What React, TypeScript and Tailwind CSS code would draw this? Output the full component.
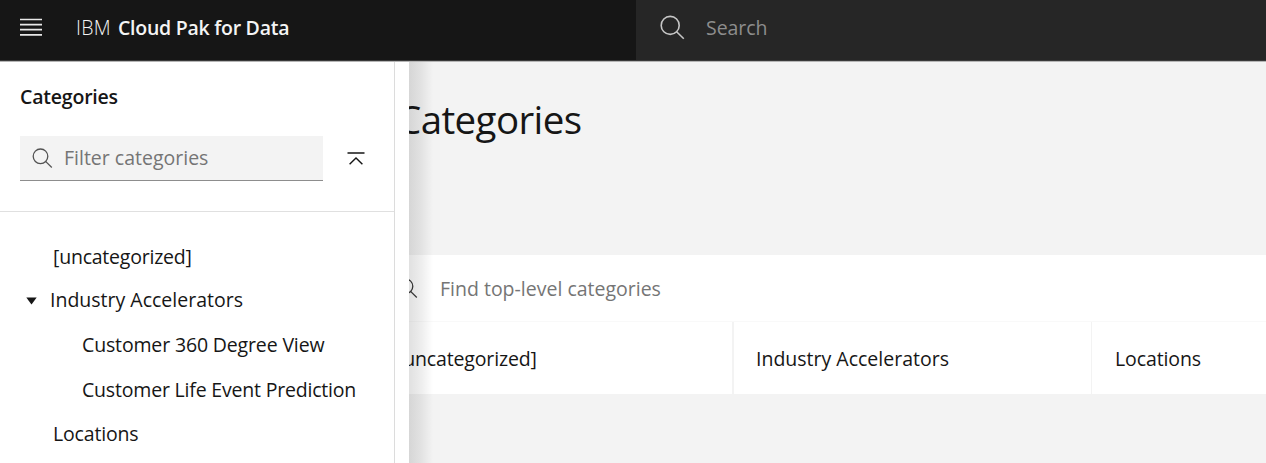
import type { ReactNode } from "react";

function SearchIcon({ className }: { className: string }) {
  return (
    <svg viewBox="0 0 24 24" fill="none" stroke="currentColor" className={className}>
      <circle cx="10.5" cy="10.3" r="7.3" />
      <path d="M15.6 15.4 L21.8 21.5" />
    </svg>
  );
}

function TreeRow({ className, children }: { className: string; children: ReactNode }) {
  return <li className={`flex items-center whitespace-nowrap ${className}`}>{children}</li>;
}

function TopBar() {
  return (
    <header className="relative z-20 flex h-[62px] w-full border-b border-[#b5b5b5] bg-[#161616]">
      <div className="flex w-[636px] items-center border-b border-[#393939] pb-[5px] pl-5">
        <svg width="22" height="19" viewBox="0 0 22 19" className="text-[#e8e8e8]" stroke="currentColor" strokeWidth="1.7">
          <path d="M0 1.5H22M0 6.6H22M0 11.7H22M0 16.8H22" />
        </svg>
        <div className="flex pt-[1px] pl-[34px] whitespace-nowrap text-[#f4f4f4]">
          <span className="w-[42px] font-light tracking-[0.3px]">IBM</span>
          <span className="font-semibold tracking-[-0.26px]">Cloud Pak for Data</span>
        </div>
      </div>
      <div className="flex flex-1 items-center border-b border-[#393939] bg-[#262626] pb-[5px] pl-[21px]">
        <svg width="30" height="30" viewBox="0 0 30 30" fill="none" stroke="#c6c6c6" strokeWidth="1.6">
          <circle cx="13.2" cy="12.4" r="9" />
          <path d="M19.6 18.8L26.8 25.8" />
        </svg>
        <span className="ml-[19px] pt-[1px] tracking-[-0.05px] text-[#8d8d8d]">Search</span>
      </div>
    </header>
  );
}

function Drawer() {
  return (
    <aside className="absolute top-0 left-0 z-10 flex h-full">
      <div className="w-[409px] bg-white pr-[14px]">
        <div className="h-full border-r border-[#dcdcdc]">
          <div className="flex h-[150px] flex-col border-b border-[#e0e0e0] pt-[21px] pl-5">
            <h2 className="h-7 leading-7 font-semibold tracking-[-0.2px]">Categories</h2>
            <div className="mt-[25px] flex items-center">
              <div className="flex h-[45px] w-[303px] items-center border-b border-[#8d8d8d] bg-[#f3f3f3] pl-[10px]">
                <SearchIcon className="size-6 stroke-[1.3] text-[#525252]" />
                <span className="ml-[10px] pb-[1px] tracking-[0px] text-[#757575]">Filter categories</span>
              </div>
              <svg width="18" height="14" viewBox="0 0 18 14" fill="none" stroke="#161616" strokeWidth="1.4" className="ml-[23.5px]">
                <path d="M0.5 1H17.5M2.6 12.3L9 5.9L15.4 12.3" />
              </svg>
            </div>
          </div>
          <ul className="pt-[22px]">
            <TreeRow className="h-[45px] pl-[53px] tracking-[-0.22px]">[uncategorized]</TreeRow>
            <TreeRow className="h-[42px] pl-[26px]">
              <svg width="11" height="8" viewBox="0 0 11 8" className="mt-[2px] mr-[13px]">
                <path d="M0.3 0.5H10.7L5.5 7.5Z" fill="#161616" />
              </svg>
              Industry Accelerators
            </TreeRow>
            <TreeRow className="h-[48px] pl-[82px] tracking-[-0.15px]">Customer 360 Degree View</TreeRow>
            <TreeRow className="h-[41px] pl-[82px] tracking-[-0.19px]">Customer Life Event Prediction</TreeRow>
            <TreeRow className="h-[48px] pl-[53px] tracking-[-0.17px]">Locations</TreeRow>
          </ul>
        </div>
      </div>
      <div className="w-[24px] bg-linear-to-r from-black/12 via-black/7 to-transparent" />
    </aside>
  );
}

export default function App() {
  return (
    <div className="flex h-[463px] w-full flex-col overflow-hidden bg-[#f3f3f3] font-['Open_Sans',sans-serif] text-[19.5px] leading-7 text-[#161616]">
      <TopBar />
      <div className="relative flex-1 overflow-hidden">
        <Drawer />
        <main className="ml-[372px]">
          <div className="h-[193px] pt-[33px] pl-[25px]">
            <h1 className="text-[38.5px] leading-[48px] tracking-[-0.6px]">Categories</h1>
          </div>
          <section className="bg-white">
            <div className="flex h-[67px] items-center border-b border-[#f9f9f9] pl-[23px]">
              <SearchIcon className="size-6 stroke-[1.3] text-[#393939]" />
              <span className="ml-[21px] pt-[2px] tracking-[0px] text-[#757575]">Find top-level categories</span>
            </div>
            <div className="flex h-[72px] items-center whitespace-nowrap">
              <div className="flex h-full w-[362px] items-center border-r-2 border-[#f3f3f3] pt-[1px] pl-[25px] tracking-[-0.15px]">[uncategorized]</div>
              <div className="flex h-full w-[358px] items-center border-r border-[#f3f3f3] pt-[1px] pl-[22px]">
                Industry Accelerators
              </div>
              <div className="pt-[1px] pl-[23px] tracking-[-0.1px]">Locations</div>
            </div>
          </section>
        </main>
      </div>
    </div>
  );
}
